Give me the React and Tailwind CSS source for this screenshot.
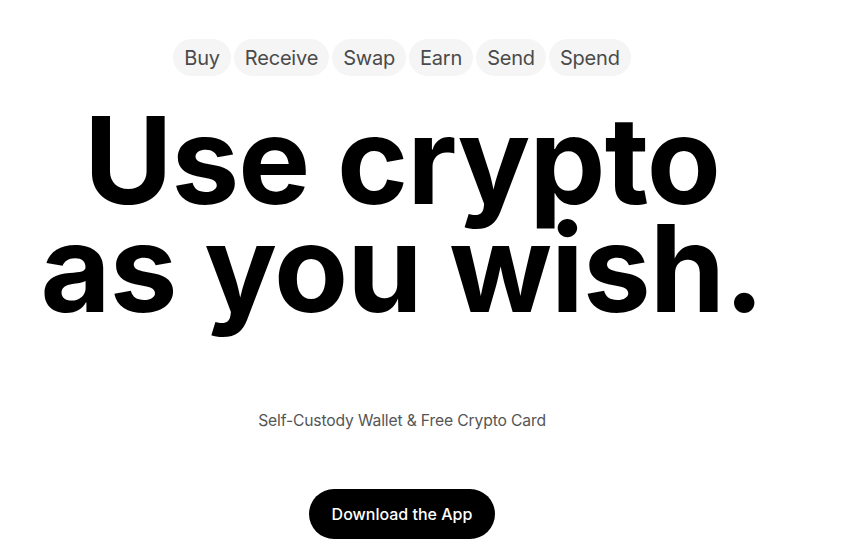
export default function App() {
  const items = ["Buy", "Receive", "Swap", "Earn", "Send", "Spend"];
  return (
    <div className="w-[850px] h-[550px] bg-white overflow-hidden" style={{ fontFamily: "Inter, 'Noto Sans', sans-serif" }}>
      <div className="w-[804px] flex flex-col items-center">
        <div className="mt-[39px] flex gap-[3px]">
          {items.map((t) => (
            <span key={t} className="h-[37px] px-[11px] flex items-center rounded-full bg-[#f5f5f5] text-[20px] leading-none text-[#4a4a4a] tracking-[-0.01em]">
              {t}
            </span>
          ))}
        </div>
        <h1 className="mt-[30px] text-center font-bold text-black text-[121px] leading-[108px] tracking-[-0.008em]">
          Use crypto
          <br />
          as you wish.
        </h1>
        <p className="mt-[89px] text-[15.7px] leading-[20px] text-[#555] tracking-[-0.01em]">Self-Custody Wallet &amp; Free Crypto Card</p>
        <button className="mt-[58px] h-[50px] px-[23px] rounded-full bg-black text-white text-[16px] font-medium">
          Download the App
        </button>
      </div>
    </div>
  );
}
